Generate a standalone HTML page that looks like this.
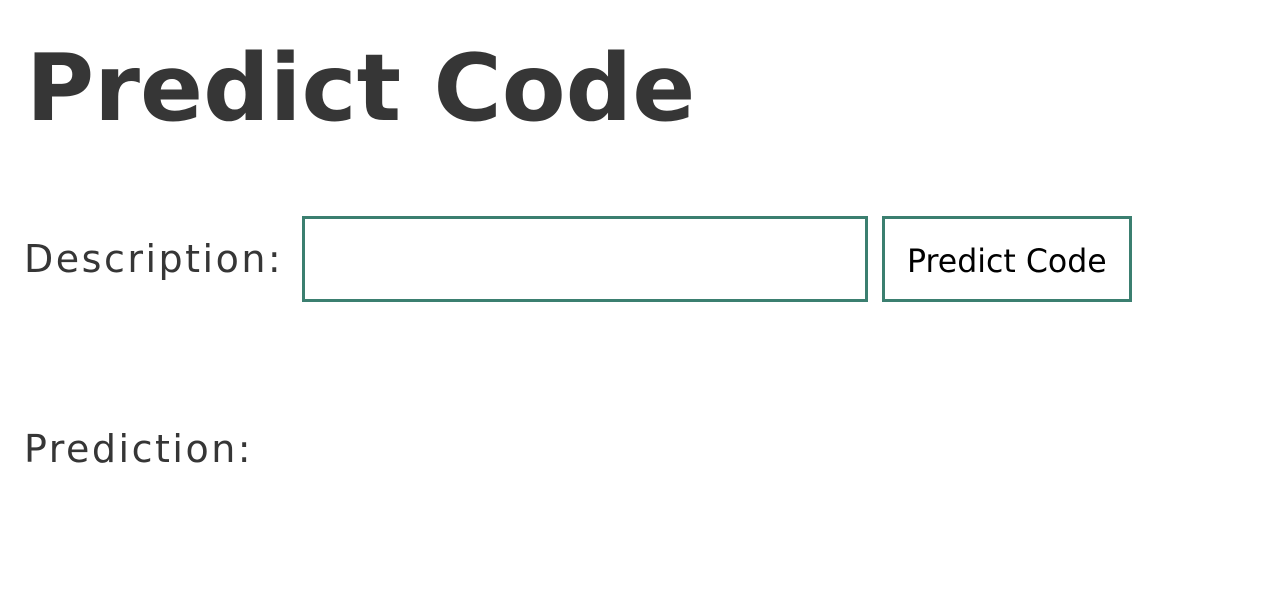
<!DOCTYPE html>
<html><head><meta charset="utf-8"><style>
html,body{margin:0;padding:0;background:#fff;width:1268px;height:594px;overflow:hidden;font-family:"DejaVu Sans","Liberation Sans",sans-serif;}
.a{position:absolute;white-space:nowrap;}
h1{position:absolute;margin:0;left:26px;top:42px;font-size:93px;line-height:93px;font-weight:bold;color:#363636;}
.lbl{font-size:38px;line-height:38px;letter-spacing:2.5px;color:#363636;left:24px;}
.box{position:absolute;box-sizing:border-box;border:3.5px solid #3b7f70;background:#fff;}
</style></head><body>
<h1>Predict Code</h1>
<div class="a lbl" style="top:240px">Description:</div>
<div class="box" style="left:302px;top:216px;width:566px;height:86px"></div>
<div class="box" style="left:882px;top:216px;width:250px;height:86px"></div>
<div class="a" style="left:907px;top:246px;font-size:31.6px;line-height:32px;color:#000">Predict Code</div>
<div class="a lbl" style="top:430px">Prediction:</div>
</body></html>
